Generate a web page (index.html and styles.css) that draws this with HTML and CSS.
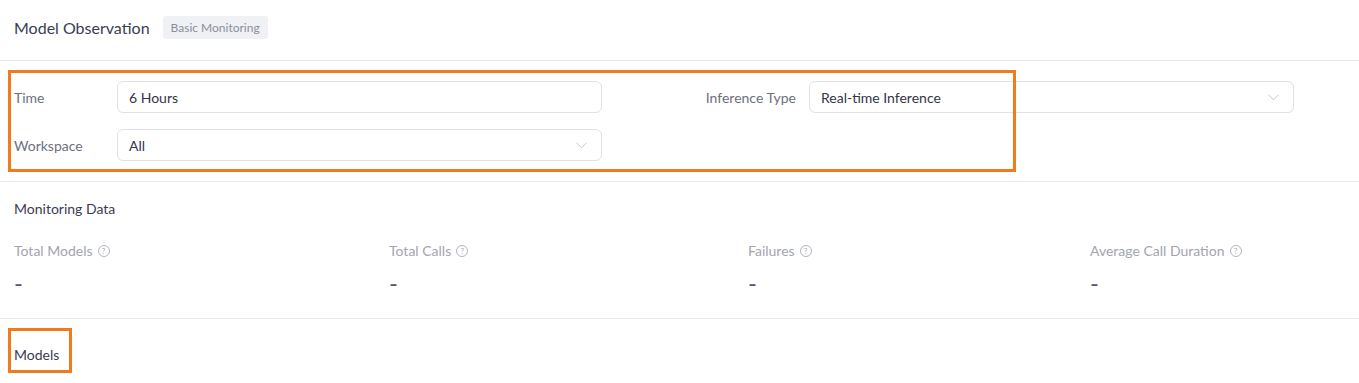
FILE: index.html
```html
<!DOCTYPE html>
<html lang="en">
<head>
<meta charset="utf-8">
<title>Model Observation</title>
<link rel="stylesheet" href="styles.css">
</head>
<body>
<div class="page">
  <header class="header">
    <h1 class="title">Model Observation</h1>
    <span class="tag">Basic Monitoring</span>
  </header>

  <section class="filters">
    <div class="filter-grid">
      <div class="field">
        <label class="field-label">Time</label>
        <div class="control"><span class="value">6 Hours</span></div>
      </div>
      <div class="field field-right">
        <label class="field-label label-right">Inference Type</label>
        <div class="control">
          <span class="value">Real-time Inference</span>
          <svg class="chev" width="11" height="7" viewBox="0 0 11 7"><path d="M0.5 0.8 L5.5 5.8 L10.5 0.8" fill="none" stroke="#c4c6cd" stroke-width="1"/></svg>
        </div>
      </div>
      <div class="field">
        <label class="field-label">Workspace</label>
        <div class="control">
          <span class="value">All</span>
          <svg class="chev" width="11" height="7" viewBox="0 0 11 7"><path d="M0.5 0.8 L5.5 5.8 L10.5 0.8" fill="none" stroke="#c4c6cd" stroke-width="1"/></svg>
        </div>
      </div>
    </div>
    <div class="annot annot-filters"></div>
  </section>

  <section class="monitor">
    <h2 class="section-title">Monitoring Data</h2>
    <div class="stats">
      <div class="stat">
        <div class="stat-label">Total Models <span class="help">?</span></div>
        <div class="stat-value">-</div>
      </div>
      <div class="stat">
        <div class="stat-label">Total Calls <span class="help">?</span></div>
        <div class="stat-value">-</div>
      </div>
      <div class="stat">
        <div class="stat-label">Failures <span class="help">?</span></div>
        <div class="stat-value">-</div>
      </div>
      <div class="stat">
        <div class="stat-label">Average Call Duration <span class="help">?</span></div>
        <div class="stat-value">-</div>
      </div>
    </div>
  </section>

  <section class="models">
    <h2 class="section-title">Models</h2>
    <div class="annot annot-models"></div>
  </section>
</div>
</body>
</html>
```

FILE: styles.css
```css
* { box-sizing: border-box; }
html, body { margin: 0; padding: 0; background: #ffffff; }
body {
  font-family: Lato, "Noto Sans", "Liberation Sans", sans-serif;
  color: #3b3d52;
  overflow: hidden;
}
.page { width: 1359px; }

.header {
  height: 61px;
  padding: 0 14px 5px;
  display: flex;
  align-items: center;
  gap: 13px;
  border-bottom: 1px solid #e7e7ec;
}
.title {
  margin: 0;
  font-size: 16px;
  font-weight: 400;
  color: #3a3c54;
}
.tag {
  background: #f0f1f5;
  color: #8b8e9b;
  font-size: 12px;
  height: 23px;
  line-height: 23px;
  padding: 0 8px;
  border-radius: 3px;
}

.filters {
  position: relative;
  padding: 20px 14px 20px;
  border-bottom: 1px solid #e7e7ec;
}
.filter-grid {
  display: grid;
  grid-template-columns: 588px 615px;
  column-gap: 77px;
  row-gap: 16px;
}
.field {
  display: flex;
  align-items: center;
}
.field-label {
  width: 103px;
  flex: none;
  font-size: 14px;
  color: #6d7080;
  white-space: nowrap;
}
.label-right {
  width: 130px;
  text-align: right;
  padding-right: 13px;
}
.control {
  flex: 1;
  height: 32px;
  border: 1px solid #dfe1e6;
  border-radius: 6px;
  display: flex;
  align-items: center;
  justify-content: space-between;
  padding: 0 14px 0 11px;
  font-size: 14px;
  color: #33354a;
}
.chev { display: block; margin-top: 1px; }

.annot {
  position: absolute;
  border: 3px solid #f07a1c;
}
.annot-filters {
  left: 8px;
  top: 9px;
  width: 1008px;
  height: 102px;
}

.monitor {
  padding: 17px 14px 20px;
  border-bottom: 1px solid #e7e7ec;
}
.section-title {
  margin: 0;
  font-size: 14px;
  line-height: 20px;
  font-weight: 400;
  color: #3a3c54;
}
.stats {
  margin-top: 22px;
  display: grid;
  grid-template-columns: 375px 359px 342px 1fr;
}
.stat-label {
  font-size: 14px;
  line-height: 20px;
  color: #a3a5ae;
  display: flex;
  align-items: center;
  gap: 5px;
}
.help {
  width: 12px;
  height: 12px;
  border: 1px solid #b3b5bd;
  border-radius: 50%;
  font-size: 8px;
  line-height: 10px;
  text-align: center;
  color: #a8aab2;
}
.stat-value {
  margin-top: 7px;
  font-size: 24px;
  line-height: 30px;
  color: #555766;
}

.models {
  position: relative;
  padding: 26px 14px 20px;
}
.annot-models {
  left: 8px;
  top: 9px;
  width: 64px;
  height: 45px;
}
```
